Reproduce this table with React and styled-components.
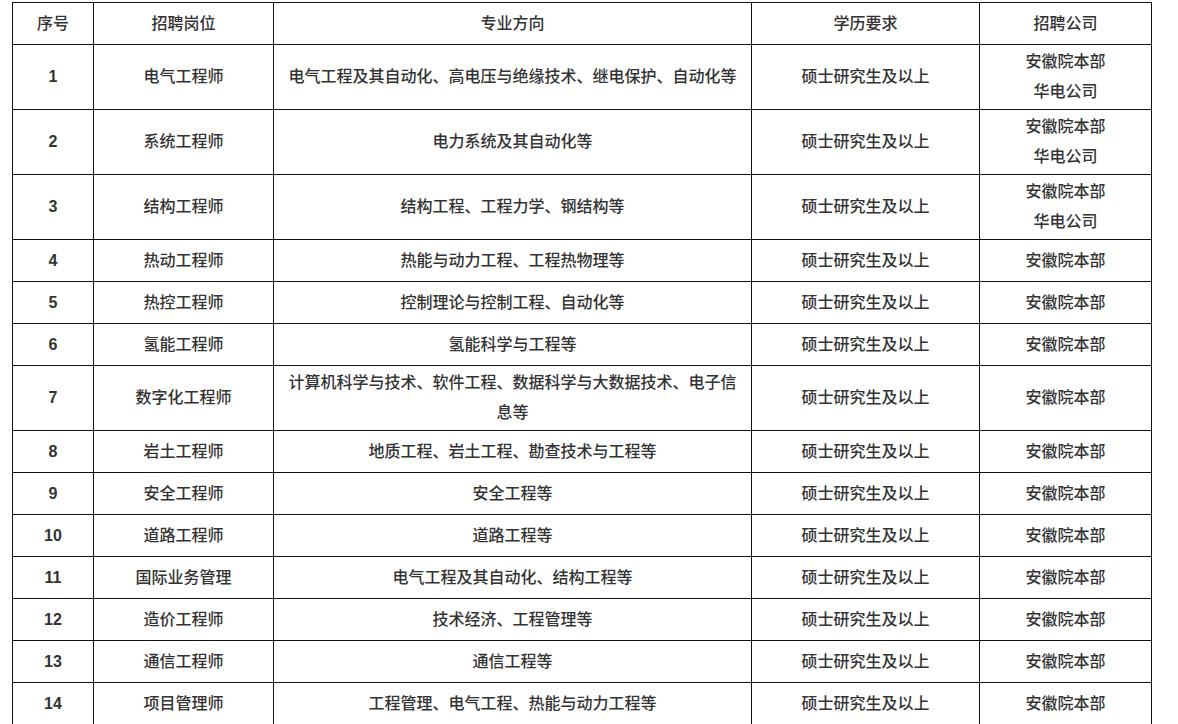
import styled, { createGlobalStyle } from "styled-components";

const GlobalStyle = createGlobalStyle`
	html, body {
		margin: 0;
		padding: 0;
		background: #fff;
	}
	body {
		font-family: "Microsoft YaHei", "Noto Sans CJK SC", "Noto Sans", sans-serif;
		color: #333;
	}
`;

const Page = styled.div`
	padding: 2px 0 0 12px;
	width: 1178px;
	height: 724px;
	box-sizing: border-box;
	overflow: hidden;
`;

const Table = styled.table`
	border-collapse: collapse;
	table-layout: fixed;
	width: 1140px;
	font-size: 16px;
`;

const Row = styled.tr`
	height: ${(p) => (p.$tall ? 65 : 42)}px;
`;

const Cell = styled.td`
	border: 1px solid #111;
	padding: ${(p) => (p.$bold ? "0 14px" : "0 14px 4px")};
	text-align: center;
	vertical-align: middle;
	line-height: 30px;
	font-weight: ${(p) => (p.$bold ? 700 : 500)};
	font-family: ${(p) =>
		p.$bold ? `"Liberation Sans", Arial, sans-serif` : "inherit"};
	word-break: break-all;
`;

const HeadCell = styled(Cell).attrs({ as: "th" })`
	font-weight: 500;
`;

const Line = styled.div``;

const columns = [
	{ label: "序号", width: 81 },
	{ label: "招聘岗位", width: 180 },
	{ label: "专业方向", width: 478 },
	{ label: "学历要求", width: 228 },
	{ label: "招聘公司", width: 172 },
];

const both = ["安徽院本部", "华电公司"];
const hq = ["安徽院本部"];
const degree = "硕士研究生及以上";

const rows = [
	["电气工程师", "电气工程及其自动化、高电压与绝缘技术、继电保护、自动化等", both],
	["系统工程师", "电力系统及其自动化等", both],
	["结构工程师", "结构工程、工程力学、钢结构等", both],
	["热动工程师", "热能与动力工程、工程热物理等", hq],
	["热控工程师", "控制理论与控制工程、自动化等", hq],
	["氢能工程师", "氢能科学与工程等", hq],
	["数字化工程师", "计算机科学与技术、软件工程、数据科学与大数据技术、电子信息等", hq],
	["岩土工程师", "地质工程、岩土工程、勘查技术与工程等", hq],
	["安全工程师", "安全工程等", hq],
	["道路工程师", "道路工程等", hq],
	["国际业务管理", "电气工程及其自动化、结构工程等", hq],
	["造价工程师", "技术经济、工程管理等", hq],
	["通信工程师", "通信工程等", hq],
	["项目管理师", "工程管理、电气工程、热能与动力工程等", hq],
];

export default function App() {
	return (
		<>
			<GlobalStyle />
			<Page>
				<Table>
					<colgroup>
						{columns.map((c) => (
							<col key={c.label} style={{ width: c.width }} />
						))}
					</colgroup>
					<thead>
						<Row>
							{columns.map((c) => (
								<HeadCell key={c.label}>{c.label}</HeadCell>
							))}
						</Row>
					</thead>
					<tbody>
						{rows.map(([job, major, companies], i) => (
							<Row key={job} $tall={companies.length > 1 || major.length > 28}>
								<Cell $bold>{i + 1}</Cell>
								<Cell>{job}</Cell>
								<Cell>{major}</Cell>
								<Cell>{degree}</Cell>
								<Cell>
									{companies.map((c) => (
										<Line key={c}>{c}</Line>
									))}
								</Cell>
							</Row>
						))}
					</tbody>
				</Table>
			</Page>
		</>
	);
}
